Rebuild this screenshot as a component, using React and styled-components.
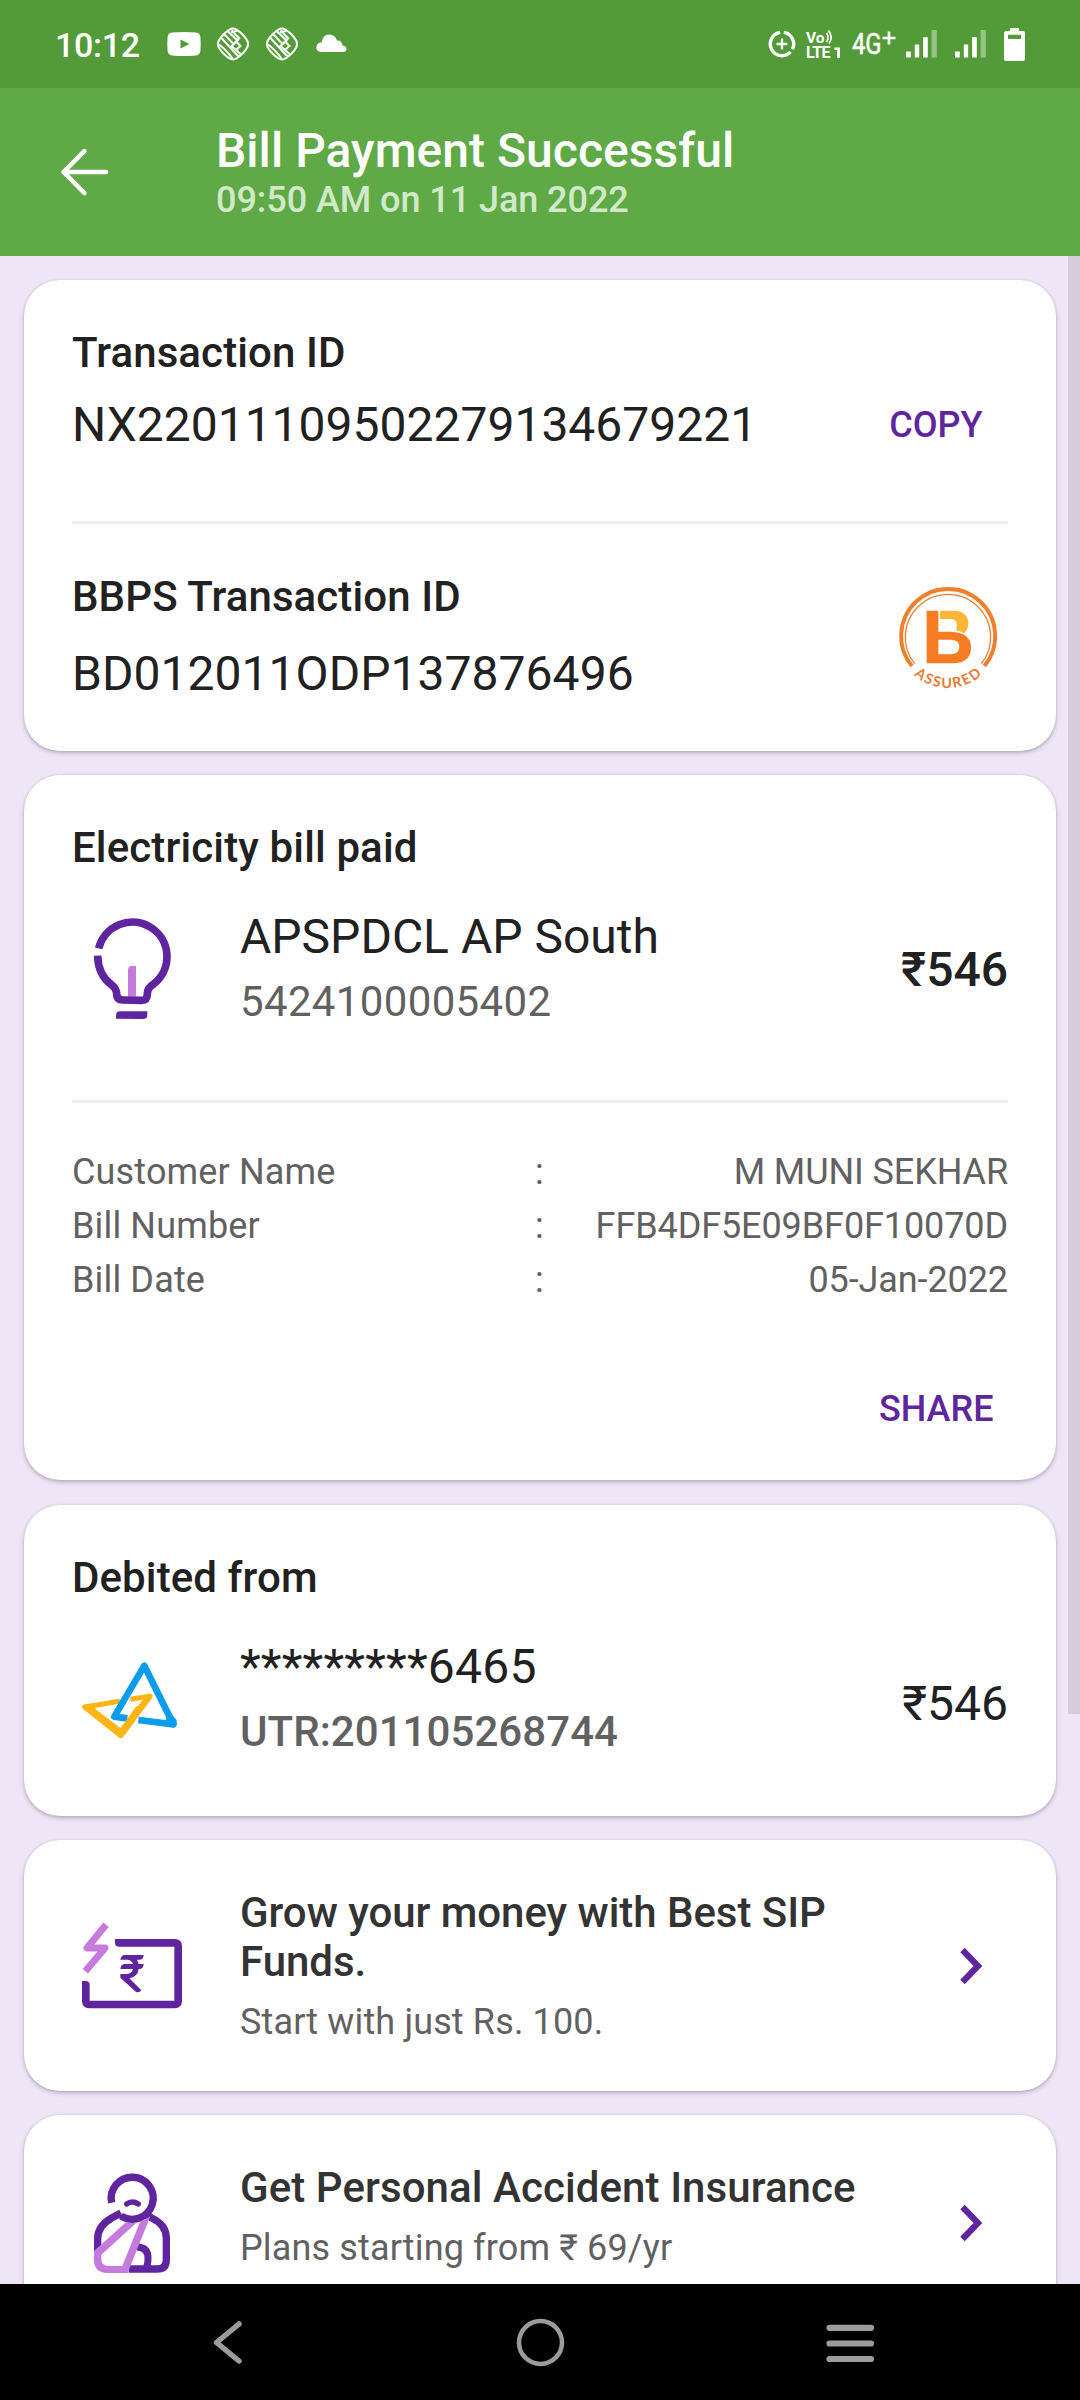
import React from "react";
import styled, { createGlobalStyle } from "styled-components";

const Global = createGlobalStyle`
  * { box-sizing: border-box; }
  html, body { margin: 0; padding: 0; background: #eee6f6; }
  body { font-family: Roboto, "Noto Sans", sans-serif; color: #212121; }
  svg { display: block; flex: none; overflow: visible; }
`;

const PURPLE = "#5f259f";
const LILAC = "#c47bdc";

const Screen = styled.div`
  width: 1080px;
  height: 2400px;
  display: flex;
  flex-direction: column;
  overflow: hidden;
`;

const StatusBar = styled.div`
  height: 88px;
  flex: none;
  display: flex;
  align-items: center;
  justify-content: space-between;
  padding: 0 55px;
  background: #539b38;
  color: #fff;
`;

const StatusGroup = styled.div`
  display: flex;
  align-items: center;
  height: 100%;
`;

const Clock = styled.span`
  font-size: 34px;
  line-height: 40px;
  font-weight: 500;
  width: 112px;
  padding-top: 2px;
  letter-spacing: -0.3px;
`;

const Network = styled.span`
  display: flex;
  font-size: 29px;
  line-height: 34px;
  width: 54px;
  padding-bottom: 1px;
  -webkit-text-stroke: 0.5px #fff;
`;

const NetworkName = styled.span`
  width: 30px;
  transform: scaleX(0.82);
  transform-origin: left center;
`;

const AppBar = styled.header`
  height: 168px;
  flex: none;
  display: flex;
  align-items: center;
  padding-left: 60px;
  gap: 106px;
  background: #5faa47;
`;

const Titles = styled.div`
  display: flex;
  flex-direction: column;
`;

const PageTitle = styled.h1`
  margin: 0;
  font-size: 48px;
  line-height: 56px;
  font-weight: 500;
  letter-spacing: 0.04px;
  color: #fff;
`;

const PageSub = styled.div`
  font-size: 36px;
  line-height: 42px;
  font-weight: 500;
  letter-spacing: -0.06px;
  color: #d2e9c9;
`;

const Scroller = styled.main`
  position: relative;
  flex: 1;
  min-height: 0;
  overflow: hidden;
  display: flex;
  flex-direction: column;
  gap: 24.5px;
  padding: 24px 24px 0;
`;

const ScrollThumb = styled.div`
  position: absolute;
  top: 0;
  right: 0;
  width: 12px;
  height: 1458px;
  background: #d5ccdc;
`;

const Card = styled.section`
  flex: none;
  height: ${(p) => p.$h}px;
  padding: 48px 48px 0;
  border-radius: 36px;
  background: #fff;
  box-shadow: 0 2px 4px rgba(60, 40, 80, 0.3), 0 0 2px rgba(60, 40, 80, 0.14);
`;

const Heading = styled.h2`
  margin: 0;
  font-size: 42px;
  line-height: 49px;
  font-weight: 500;
  letter-spacing: ${(p) => p.$track ?? 0.1}px;
  color: ${(p) => p.$color || "#212121"};
`;

const Value = styled.div`
  font-size: 48px;
  line-height: 56px;
  letter-spacing: ${(p) => p.$track || 0}px;
`;

const Caption = styled.div`
  font-size: ${(p) => p.$size || 42}px;
  line-height: ${(p) => ((p.$size || 42) * 7) / 6}px;
  font-weight: ${(p) => p.$weight || 400};
  letter-spacing: ${(p) => p.$track || 0}px;
  margin-top: ${(p) => p.$gap || 12}px;
  color: #616161;
`;

const Row = styled.div`
  display: flex;
  align-items: center;
  justify-content: space-between;
  margin-top: ${(p) => p.$top || 0}px;
`;

const Stack = styled.div`
  display: flex;
  flex-direction: column;
  gap: ${(p) => p.$gap || 0}px;
`;

const Details = styled.div`
  display: flex;
  flex-direction: column;
  align-self: flex-start;
  flex: 1;
  margin-left: 48px;
`;

const Price = styled.div`
  font-size: 48px;
  line-height: 56px;
  font-weight: ${(p) => p.$weight || 400};
  padding-top: ${(p) => p.$drop || 0}px;
`;

const Rule = styled.hr`
  width: 100%;
  height: 3px;
  border: 0;
  background: #eee;
  margin: ${(p) => p.$top}px 0 ${(p) => p.$bottom}px;
`;

const TextButton = styled.button`
  border: 0;
  background: none;
  font: 500 36px/42px Roboto, sans-serif;
  color: ${PURPLE};
  padding: 0 ${(p) => p.$right}px 0 0;
`;

const Facts = styled.dl`
  margin: 0;
  display: grid;
  grid-template-columns: 463px 20px 1fr;
  font-size: 36px;
  line-height: 54px;
  color: #616161;
`;

const Fact = styled.dd`
  margin: 0;
  text-align: ${(p) => (p.$end ? "right" : "left")};
  letter-spacing: ${(p) => (p.$end ? -0.1 : 0.15)}px;
`;

const ShareLine = styled.div`
  display: flex;
  justify-content: flex-end;
  margin-top: 81px;
`;

const Promo = styled.div`
  display: flex;
  align-items: center;
  min-height: 120px;
`;

const ChevronBox = styled.div`
  width: 80px;
  display: flex;
  align-items: center;
`;

const NavBar = styled.nav`
  height: 116px;
  flex: none;
  display: flex;
  align-items: center;
  justify-content: space-between;
  padding: 0 203px 0 204px;
  background: #000;
`;

const YouTube = () => (
  <svg width="34" height="24" viewBox="0 0 34 24">
    <path fillRule="evenodd" fill="#fff" d="M5 .6Q17-.4 29 .6Q33 1 33.4 5Q34 12 33.4 19Q33 23 29 23.4Q17 24.4 5 23.4Q1 23 .6 19Q0 12 .6 5Q1 1 5 .6ZM13.5 7.4V16.6L22.3 12Z" />
  </svg>
);

const Knot = () => (
  <svg width="32" height="32" viewBox="0 0 32 32" fill="none" stroke="#fff" strokeWidth="2">
    <path d="M12.5 1.6Q16-.4 19.5 1.6Q26.4 6 30.2 12.5Q32 16 30.2 19.5Q26.4 26 19.5 30.4Q16 32.4 12.5 30.4Q5.6 26 1.8 19.5Q0 16 1.8 12.5Q5.6 6 12.5 1.6Z" />
    <path d="M2 16.5Q9 21.5 15.5 30.5M4 9.5Q9 15 21.5 28.5M7.5 6.5L14 13.5L17 16L20.5 12.6L11 3.5M14.5 2.5L22.2 10.2L14.5 18L24 26.5M20 14.5L23.5 18L19.5 21.5M14 4L20 3" />
  </svg>
);

const Cloud = () => (
  <svg width="31" height="18" viewBox="0 0 31 18" fill="#fff">
    <path d="M5 18Q0 17.5 .3 13Q.7 9 5.6 8.2Q7 .8 13 .5Q19 .4 21 6.6Q25.5 6.2 26.6 11.5Q30.6 12.2 30.6 15Q30.4 18 27 18Z" />
  </svg>
);

const DataSaver = () => (
  <svg width="28" height="28" viewBox="0 0 28 28" fill="none" stroke="#fff">
    <path strokeWidth="3.4" d="M12.2 2.4A11.7 11.7 0 1 0 22.6 21.9M15.8 2.4A11.7 11.7 0 0 1 24.4 19.3" />
    <path strokeWidth="2.3" d="M14 8.6V19.4M8.6 14H19.4" />
  </svg>
);

const VoLte = () => (
  <svg width="36" height="30" viewBox="0 0 36 30" fill="#fff">
    <text fontFamily="Roboto, sans-serif" fontWeight="700">
      <tspan x="0" y="14" fontSize="15.5">Vo</tspan>
      <tspan x="0" y="29" fontSize="16" letterSpacing="-0.6">LTE</tspan>
    </text>
    <path d="M20.5 4Q23.6 8.5 20.5 13M22.2 1.4Q27.8 8 23 14.4" fill="none" stroke="#fff" strokeWidth="1.7" />
    <path d="M28.5 18.5H34V29H31V21H28.5Z" />
  </svg>
);

const NetworkPlus = () => (
  <svg width="14" height="14" viewBox="0 0 14 14" fill="none" stroke="#fff" strokeWidth="2.7">
    <path d="M7 .5V13.5M.5 7H13.5" />
  </svg>
);

const Signal = () => (
  <svg width="31" height="28" viewBox="0 0 31 28" fill="#fff">
    <path d="M0 21.4H4.8V27.6H0ZM8.8 14.4H13.2V27.6H8.8ZM17 7.2H21.8V27.6H17Z" />
    <path opacity=".4" d="M25.6 0H30.8V27.6H25.6Z" />
  </svg>
);

const Battery = () => (
  <svg width="21" height="33" viewBox="0 0 21 33">
    <path fillRule="evenodd" fill="#fff" d="M6 0H15V3H19Q21 3 21 5V31Q21 33 19 33H2Q0 33 0 31V5Q0 3 2 3H6ZM4 6.8V11H17V6.8Z" />
  </svg>
);

const BackArrow = () => (
  <svg width="50" height="50" viewBox="0 0 50 50" fill="none" stroke="#fff" strokeWidth="4.6" strokeLinecap="round" strokeLinejoin="round">
    <path d="M46 25H3.6M24.3 4.2L3.6 25L24.3 46" />
  </svg>
);

const BharatAssured = () => (
  <svg width="120" height="120" viewBox="324 649 360 360">
    <g fill="none" stroke="#ef7f2c">
      <path strokeWidth="11.5" d="M396 916A141 141 0 1 1 613 916" />
      <path strokeWidth="4" d="M404 909A128 128 0 1 1 604 909" />
    </g>
    <path fill="#f77b22" fillRule="evenodd" d="M440 750H475V813H512Q573 815 573 860Q573 908 518 908H440ZM475 837V881H512Q538 880 538 859Q538 837 512 837Z" />
    <path fill="#fdb735" d="M480 750H527Q565 754 565 789Q564 808 551 818Q540 811 527 808Q531 801 531 793Q530 775 512 775H480Z" />
    <path id="assured-arc" fill="none" d="M353 831A151 151 0 0 0 655 831" />
    <text fill="#e67c38" fontSize="43" fontWeight="700" letterSpacing="5" fontFamily="Lato, sans-serif" textAnchor="middle">
      <textPath href="#assured-arc" startOffset="50.5%">ASSURED</textPath>
    </text>
  </svg>
);

const Bulb = () => (
  <svg width="120" height="120" viewBox="36 84 360 360">
    <path fill={LILAC} d="M204 347V267Q204 255 216 255H228V347Z" />
    <path fill="none" stroke={PURPLE} strokeWidth="23" d="M116 202A104 104 0 1 1 281 309Q262 321 262 338Q262 358 245 358L188 357Q170 357 170 340Q170 323 154 311Q114 281 113 224" />
    <path fill={PURPLE} d="M168 413V404Q168 391 181 391H262V401Q262 414 249 414Z" />
  </svg>
);

const BankLogo = () => (
  <svg width="120" height="120" viewBox="36 27 360 360" fill="none" strokeLinejoin="round">
    <path stroke="#fdb515" strokeWidth="15" d="M180 214L74 231L182 317L270 199L211 208" />
    <path fill="#fdb515" fillRule="evenodd" d="M66 230L105 233L181 294L246 212L278 196L276 204L187 323L179 324Z" />
    <path fill="#fff" d="M105 236L172 223L157 253Q153 264 164 269L198 273L182 294Z" />
    <path stroke="#0c9cec" strokeWidth="20" d="M235 270L340 283L253 107L163 260L202 265" />
    <path fill="#0c9cec" d="M316 273L327 245L350 270V283Q348 292 337 293Z" />
    <path stroke="#fdb515" strokeWidth="22" d="M187 306L239 234" />
  </svg>
);

const MoneyIcon = () => (
  <svg width="120" height="120" viewBox="36 45 360 360" fill="none">
    <path stroke={LILAC} strokeWidth="21" strokeLinejoin="round" d="M138 101L81 171H135L76 241" />
    <path fill={PURPLE} fillRule="evenodd" d="M165 144H344Q366 144 366 166V330Q366 352 344 352H88Q66 352 66 330V270H77Q89 270 89 282V329H343V167H177Q165 167 165 155Z" />
    <path fill={PURPLE} d="M181 206Q184 192 194 192H251Q250 206 240 206H230Q235 212 236 219H251Q250 233 240 234H236Q233 258 208 262L244 298Q238 306 228 303L181 260V249H200Q216 248 219 234H181Q183 219 194 219H219Q216 208 203 206Z" />
  </svg>
);

const InjuryIcon = () => (
  <svg width="120" height="120" viewBox="36 98 360 360" fill="none">
    <path stroke={PURPLE} strokeWidth="22" d="M155 217A63 63 0 1 1 183 257" />
    <path stroke={PURPLE} strokeWidth="22" d="M183 248L155 263Q113 287 113 325V364M264 256L275 263Q319 284 319 323V388Q319 416 292 416H206" />
    <path stroke={PURPLE} strokeWidth="21" d="M230 350Q264 350 264 383Q264 403 258 411" />
    <path stroke={PURPLE} strokeWidth="16" strokeLinecap="round" d="M200 221Q217 209 235 221" />
    <path fill={LILAC} fillRule="evenodd" d="M102 362L198 276Q215 280 231 276L124 373V386Q124 407 145 407H187L240 275Q257 269 271 258L203 428H142Q102 427 102 388Z" />
  </svg>
);

const Chevron = () => (
  <svg width="34" height="38" viewBox="0 0 34 38" fill="none" stroke={PURPLE} strokeWidth="6.2">
    <path d="M3.5 3L19 19L3.5 35" />
  </svg>
);

const NavBack = () => (
  <svg width="48" height="48" viewBox="0 0 48 48" fill="none" stroke="#9b9b9b" strokeWidth="5.5" strokeLinecap="round" strokeLinejoin="round">
    <path d="M35 6L12.5 24.5L35 43" />
  </svg>
);
const NavHome = () => (
  <svg width="48" height="48" viewBox="0 0 48 48" fill="none" stroke="#9b9b9b" strokeWidth="4.5">
    <circle cx="24.5" cy="24.5" r="21.5" />
  </svg>
);
const NavMenu = () => (
  <svg width="50" height="48" viewBox="0 0 50 48" fill="none" stroke="#9b9b9b" strokeWidth="6.2" strokeLinecap="round">
    <path d="M2.5 9.8H44M2.5 25.5H44M2.5 41H44" />
  </svg>
);

const IconSlot = styled.span`
  display: flex;
  margin-left: ${(p) => p.$l || 0}px;
  margin-top: ${(p) => p.$t || 0}px;
`;

const facts = [
  ["Customer Name", "M MUNI SEKHAR"],
  ["Bill Number", "FFB4DF5E09BF0F10070D"],
  ["Bill Date", "05-Jan-2022"],
];

function PromoCard({ icon, title, sub, height, track }) {
  return (
    <Card $h={height}>
      <Promo>
        {icon}
        <Details>
          <Heading $color="#333" $track={track}>{title}</Heading>
          <Caption $size={36} $gap={15} $track={0.14}>{sub}</Caption>
        </Details>
        <ChevronBox>
          <IconSlot $l={31}><Chevron /></IconSlot>
        </ChevronBox>
      </Promo>
    </Card>
  );
}

export default function App() {
  return (
    <Screen>
      <Global />
      <StatusBar>
        <StatusGroup>
          <Clock>10:12</Clock>
          <IconSlot><YouTube /></IconSlot>
          <IconSlot $l={16}><Knot /></IconSlot>
          <IconSlot $l={17}><Knot /></IconSlot>
          <IconSlot $l={18} $t={-2}><Cloud /></IconSlot>
        </StatusGroup>
        <StatusGroup>
          <IconSlot><DataSaver /></IconSlot>
          <IconSlot $l={10}><VoLte /></IconSlot>
          <IconSlot $l={10}>
            <Network>
              <NetworkName>4G</NetworkName>
              <IconSlot $t={4}><NetworkPlus /></IconSlot>
            </Network>
          </IconSlot>
          <IconSlot><Signal /></IconSlot>
          <IconSlot $l={18}><Signal /></IconSlot>
          <IconSlot $l={18}><Battery /></IconSlot>
        </StatusGroup>
      </StatusBar>

      <AppBar>
        <BackArrow />
        <Titles>
          <PageTitle>Bill Payment Successful</PageTitle>
          <PageSub>09:50 AM on 11 Jan 2022</PageSub>
        </Titles>
      </AppBar>

      <Scroller>
        <Card $h={470.5}>
          <Heading>Transaction ID</Heading>
          <Row $top={20}>
            <Value>NX22011109502279134679221</Value>
            <TextButton $right={25.5}>COPY</TextButton>
          </Row>
          <Rule $top={68} $bottom={48} />
          <Row>
            <Stack $gap={25}>
              <Heading>BBPS Transaction ID</Heading>
              <Value $track={0.04}>BD012011ODP137876496</Value>
            </Stack>
            <BharatAssured />
          </Row>
        </Card>

        <Card $h={705}>
          <Heading $track={0.13}>Electricity bill paid</Heading>
          <Row $top={37}>
            <Bulb />
            <Details>
              <Value>APSPDCL AP South</Value>
              <Caption $track={0.35}>5424100005402</Caption>
            </Details>
            <Price $weight={500} $drop={2}>₹546</Price>
          </Row>
          <Rule $top={71} $bottom={42} />
          <Facts>
            {facts.map(([name, value]) => (
              <React.Fragment key={name}>
                <Fact as="dt">{name}</Fact>
                <Fact>:</Fact>
                <Fact $end>{value}</Fact>
              </React.Fragment>
            ))}
          </Facts>
          <ShareLine>
            <TextButton $right={14.5}>SHARE</TextButton>
          </ShareLine>
        </Card>

        <Card $h={311}>
          <Heading>Debited from</Heading>
          <Row $top={37.5}>
            <BankLogo />
            <Details>
              <Value $track={0.2}>*********6465</Value>
              <Caption $weight={500} $track={0.06}>UTR:201105268744</Caption>
            </Details>
            <Price $drop={10}>₹546</Price>
          </Row>
        </Card>

        <PromoCard
          height={250.5}
          icon={<MoneyIcon />}
          title={<>Grow your money with Best SIP<br />Funds.</>}
          track={-0.04}
          sub="Start with just Rs. 100."
        />
        <PromoCard
          height={216}
          icon={<InjuryIcon />}
          title="Get Personal Accident Insurance"
          track={0.08}
          sub="Plans starting from ₹ 69/yr"
        />
        <ScrollThumb />
      </Scroller>

      <NavBar>
        <NavBack />
        <NavHome />
        <NavMenu />
      </NavBar>
    </Screen>
  );
}
